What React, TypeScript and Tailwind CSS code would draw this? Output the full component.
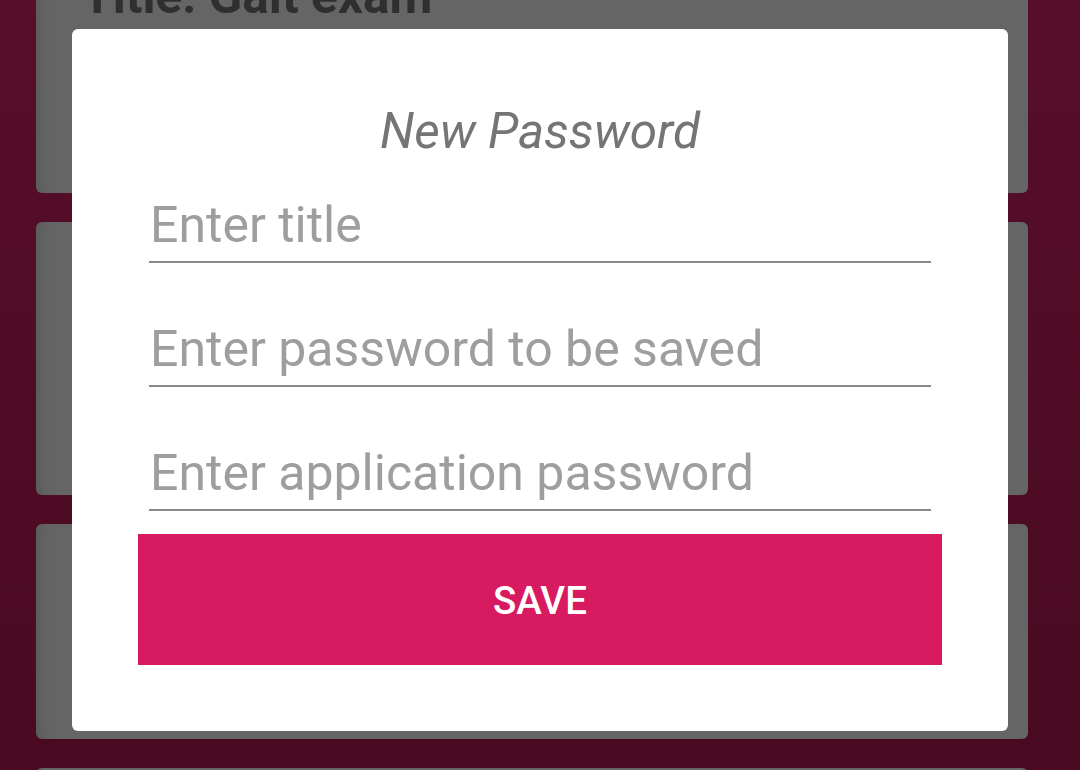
import React from "react";

const font = { fontFamily: "Roboto, 'Noto Sans', 'Liberation Sans', sans-serif" };

function Field({ label, first }: { label: string; first?: boolean }) {
  return (
    <div className={`flex flex-col mx-[11px] ${first ? "mt-[36px]" : "mt-[57px]"}`}>
      <div className="text-[50px] leading-[58px] text-[#9e9e9e] pl-[1px] whitespace-nowrap">{label}</div>
      <div className="mt-[7px] h-[2px] bg-[#888888]" />
    </div>
  );
}

export default function App() {
  return (
    <div
      className="relative w-[1080px] h-[770px] overflow-hidden bg-gradient-to-b from-[#570e2b] to-[#490a21]"
      style={font}
    >
      <div className="flex flex-col gap-[29px] pl-[36px] pr-[52px] -mt-[80px]">
        <div className="h-[273px] rounded-[6px] bg-[#656565] shadow-[inset_14px_0_12px_-10px_rgba(0,0,0,0.12)] px-[46px] pt-[47px]">
          <div className="text-[49.5px] leading-[58px] font-bold text-[#2f2f2f] whitespace-nowrap">Title: Gait exam</div>
        </div>
        <div className="h-[273px] rounded-[6px] bg-[#656565] shadow-[inset_14px_0_12px_-10px_rgba(0,0,0,0.12)]" />
        <div className="h-[215px] rounded-[6px] bg-[#656565] shadow-[inset_14px_0_12px_-10px_rgba(0,0,0,0.12)]" />
        <div className="h-[215px] rounded-[6px] bg-[#656565]" />
      </div>

      <div className="absolute inset-0 flex justify-center items-start pt-[29px]">
        <div className="w-[936px] h-[702px] bg-white rounded-[6px] px-[66px] pt-[73px] flex flex-col">
          <div className="text-center italic text-[49.5px] leading-[58px] text-[#757575]">New Password</div>
          <Field label="Enter title" first />
          <Field label="Enter password to be saved" />
          <Field label="Enter application password" />
          <button className="mt-[23px] h-[131px] w-full bg-[#d81b60] text-white text-[38.5px] font-medium flex items-center justify-center pt-[3px]">
            SAVE
          </button>
        </div>
      </div>
    </div>
  );
}
